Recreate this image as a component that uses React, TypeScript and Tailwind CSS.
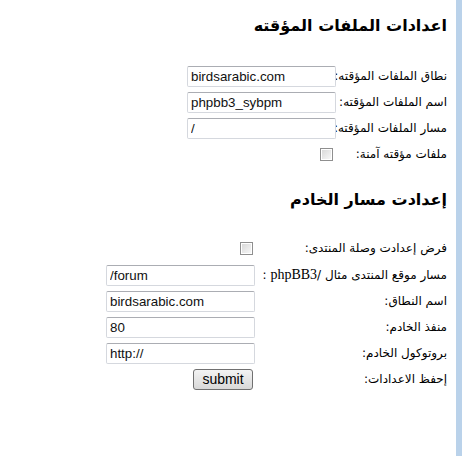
const sans = "font-['Liberation_Sans',Arial,sans-serif]"

function TextInput({ value }: { value: string }) {
  return (
    <input
      dir="ltr"
      type="text"
      defaultValue={value}
      className={`${sans} block h-[21px] w-[149px] rounded-[2px] border border-[#d5d8de] border-t-[#abadb3] bg-white px-[3px] text-left text-[13.33px] text-[#111] outline-none`}
    />
  )
}

function Check({ className = "" }: { className?: string }) {
  return (
    <input
      type="checkbox"
      className={`block h-[13px] w-[13px] appearance-none border border-[#8f8f8f] bg-linear-to-br from-[#d6d6d6] to-[#fafafa] shadow-[inset_0_0_0_1px_#ffffff] ${className}`}
    />
  )
}

function Label({ children }: { children: React.ReactNode }) {
  return <div className="text-right text-[12px] leading-[21px] whitespace-nowrap">{children}</div>
}

export default function App() {
  return (
    <div className="flex min-h-[456px] bg-white">
      <main
        dir="rtl"
        className="flex-1 pr-[9px] pt-[14px] font-['DejaVu_Sans',sans-serif] text-black"
      >
        <h2 className="text-[16px] leading-[24px] font-bold">اعدادات الملفات المؤقته</h2>

        <div className="mt-[28px] grid grid-cols-[106px_149px] items-center gap-x-[5px] gap-y-[5px]">
          <Label>نطاق الملفات المؤقته:</Label>
          <TextInput value="birdsarabic.com" />
          <Label>اسم الملفات المؤقته:</Label>
          <TextInput value="phpbb3_sybpm" />
          <Label>مسار الملفات المؤقته:</Label>
          <TextInput value="/" />
          <Label>ملفات مؤقته آمنة:</Label>
          <div className="flex h-[21px] items-center">
            <Check className="mr-[3px]" />
          </div>
        </div>

        <h2 className="mt-[23px] text-[16px] leading-[24px] font-bold">إعدادت مسار الخادم</h2>

        <div className="mt-[26px] grid grid-cols-[188px_149px] items-center gap-x-[4px] gap-y-[5px]">
          <Label>فرض إعدادت وصلة المنتدى:</Label>
          <div className="flex h-[21px] items-center">
            <Check className="mr-[2px]" />
          </div>
          <Label>
            مسار موقع المنتدى مثال /<span className="font-['Liberation_Serif',serif] text-[14px]">phpBB3</span> :
          </Label>
          <TextInput value="/forum" />
          <Label>اسم النطاق:</Label>
          <TextInput value="birdsarabic.com" />
          <Label>منفذ الخادم:</Label>
          <TextInput value="80" />
          <Label>بروتوكول الخادم:</Label>
          <TextInput value="http://" />
          <Label>إحفظ الاعدادات:</Label>
          <div className="flex">
            <button
              type="button"
              className={`${sans} mr-[2px] h-[21px] w-[60px] rounded-[3px] border border-[#707070] bg-linear-to-b from-[#f3f3f3] to-[#d8d8d8] text-[14px] leading-[19px] text-black`}
            >
              submit
            </button>
          </div>
        </div>
      </main>
      <div className="w-[6px] shrink-0 bg-[#bad2ea]" />
    </div>
  )
}
